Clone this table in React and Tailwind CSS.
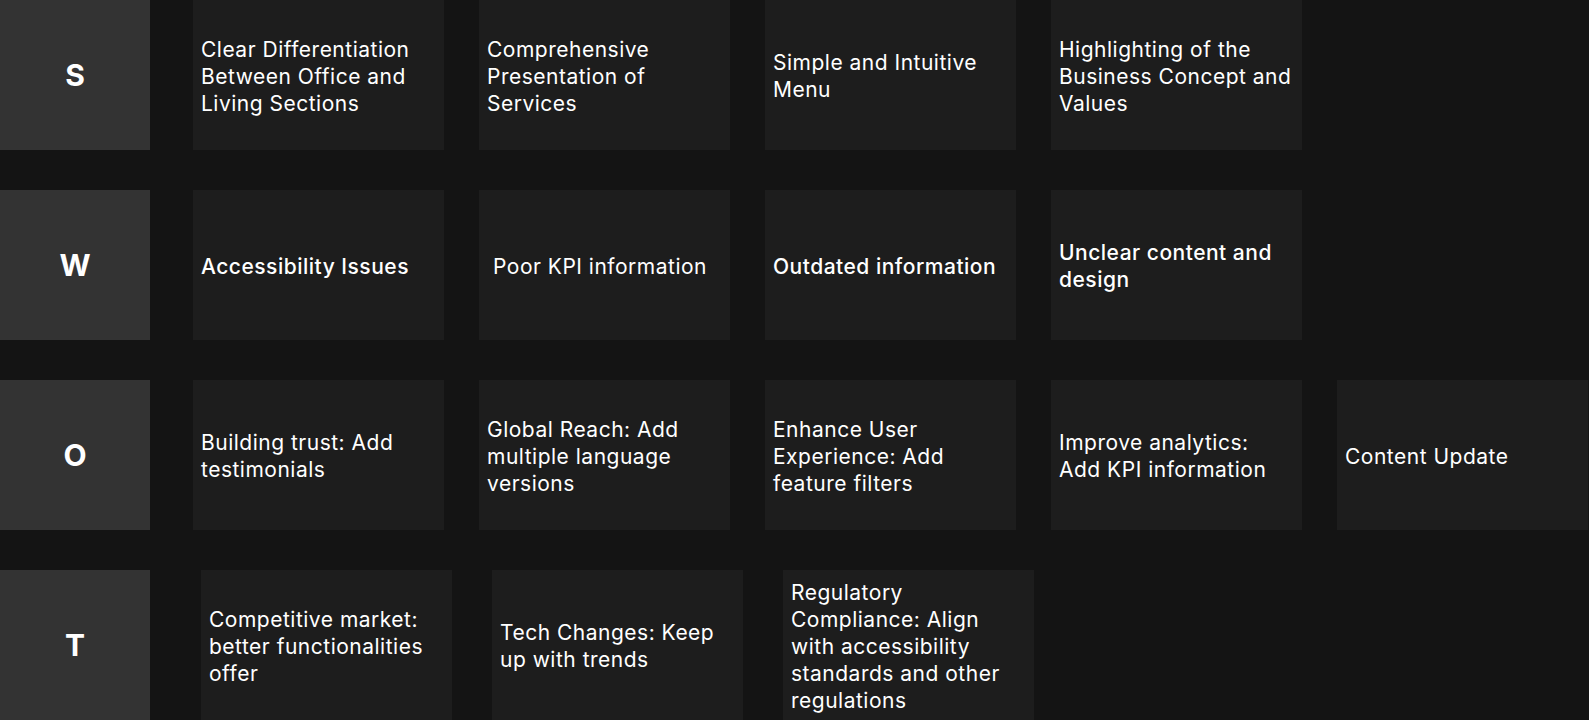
export default function App() {
  const Card = ({ children, medium }) => (
    <div className={`w-[251px] h-[150px] shrink-0 bg-[#1d1d1d] flex items-center px-2 pt-[2px] text-[21px] tracking-[0.5px] leading-[27px] text-white ${medium ? "font-medium" : "font-normal"}`}>
      <div>{children}</div>
    </div>
  );
  const Label = ({ l }) => (
    <div className="w-[150px] h-[150px] shrink-0 bg-[#333333] flex items-center justify-center text-white text-[30px] font-bold">
      {l}
    </div>
  );
  return (
    <div className="w-[1589px] h-[720px] overflow-hidden bg-[#141414] flex flex-col gap-[40px]" style={{ fontFamily: "Inter, 'Noto Sans', sans-serif" }}>
      <div className="flex">
        <Label l="S" />
        <div className="flex gap-[35px] ml-[43px]">
          <Card>Clear Differentiation<br />Between Office and<br />Living Sections</Card>
          <Card>Comprehensive<br />Presentation of<br />Services</Card>
          <Card>Simple and Intuitive<br />Menu</Card>
          <Card>Highlighting of the<br />Business Concept and<br />Values</Card>
        </div>
      </div>
      <div className="flex">
        <Label l="W" />
        <div className="flex gap-[35px] ml-[43px]">
          <Card medium>Accessibility Issues</Card>
          <Card><span className="pl-[6px]">Poor KPI information</span></Card>
          <Card medium>Outdated information</Card>
          <Card medium>Unclear content and<br />design</Card>
        </div>
      </div>
      <div className="flex">
        <Label l="O" />
        <div className="flex gap-[35px] ml-[43px]">
          <Card>Building trust: Add<br />testimonials</Card>
          <Card>Global Reach: Add<br />multiple language<br />versions</Card>
          <Card>Enhance User<br />Experience: Add<br />feature filters</Card>
          <Card>Improve analytics:<br />Add KPI information</Card>
          <Card>Content Update</Card>
        </div>
      </div>
      <div className="flex">
        <Label l="T" />
        <div className="flex gap-[40px] ml-[51px]">
          <Card>Competitive market:<br />better functionalities<br />offer</Card>
          <Card>Tech Changes: Keep<br />up with trends</Card>
          <Card>Regulatory<br />Compliance: Align<br />with accessibility<br />standards and other<br />regulations</Card>
        </div>
      </div>
    </div>
  );
}
